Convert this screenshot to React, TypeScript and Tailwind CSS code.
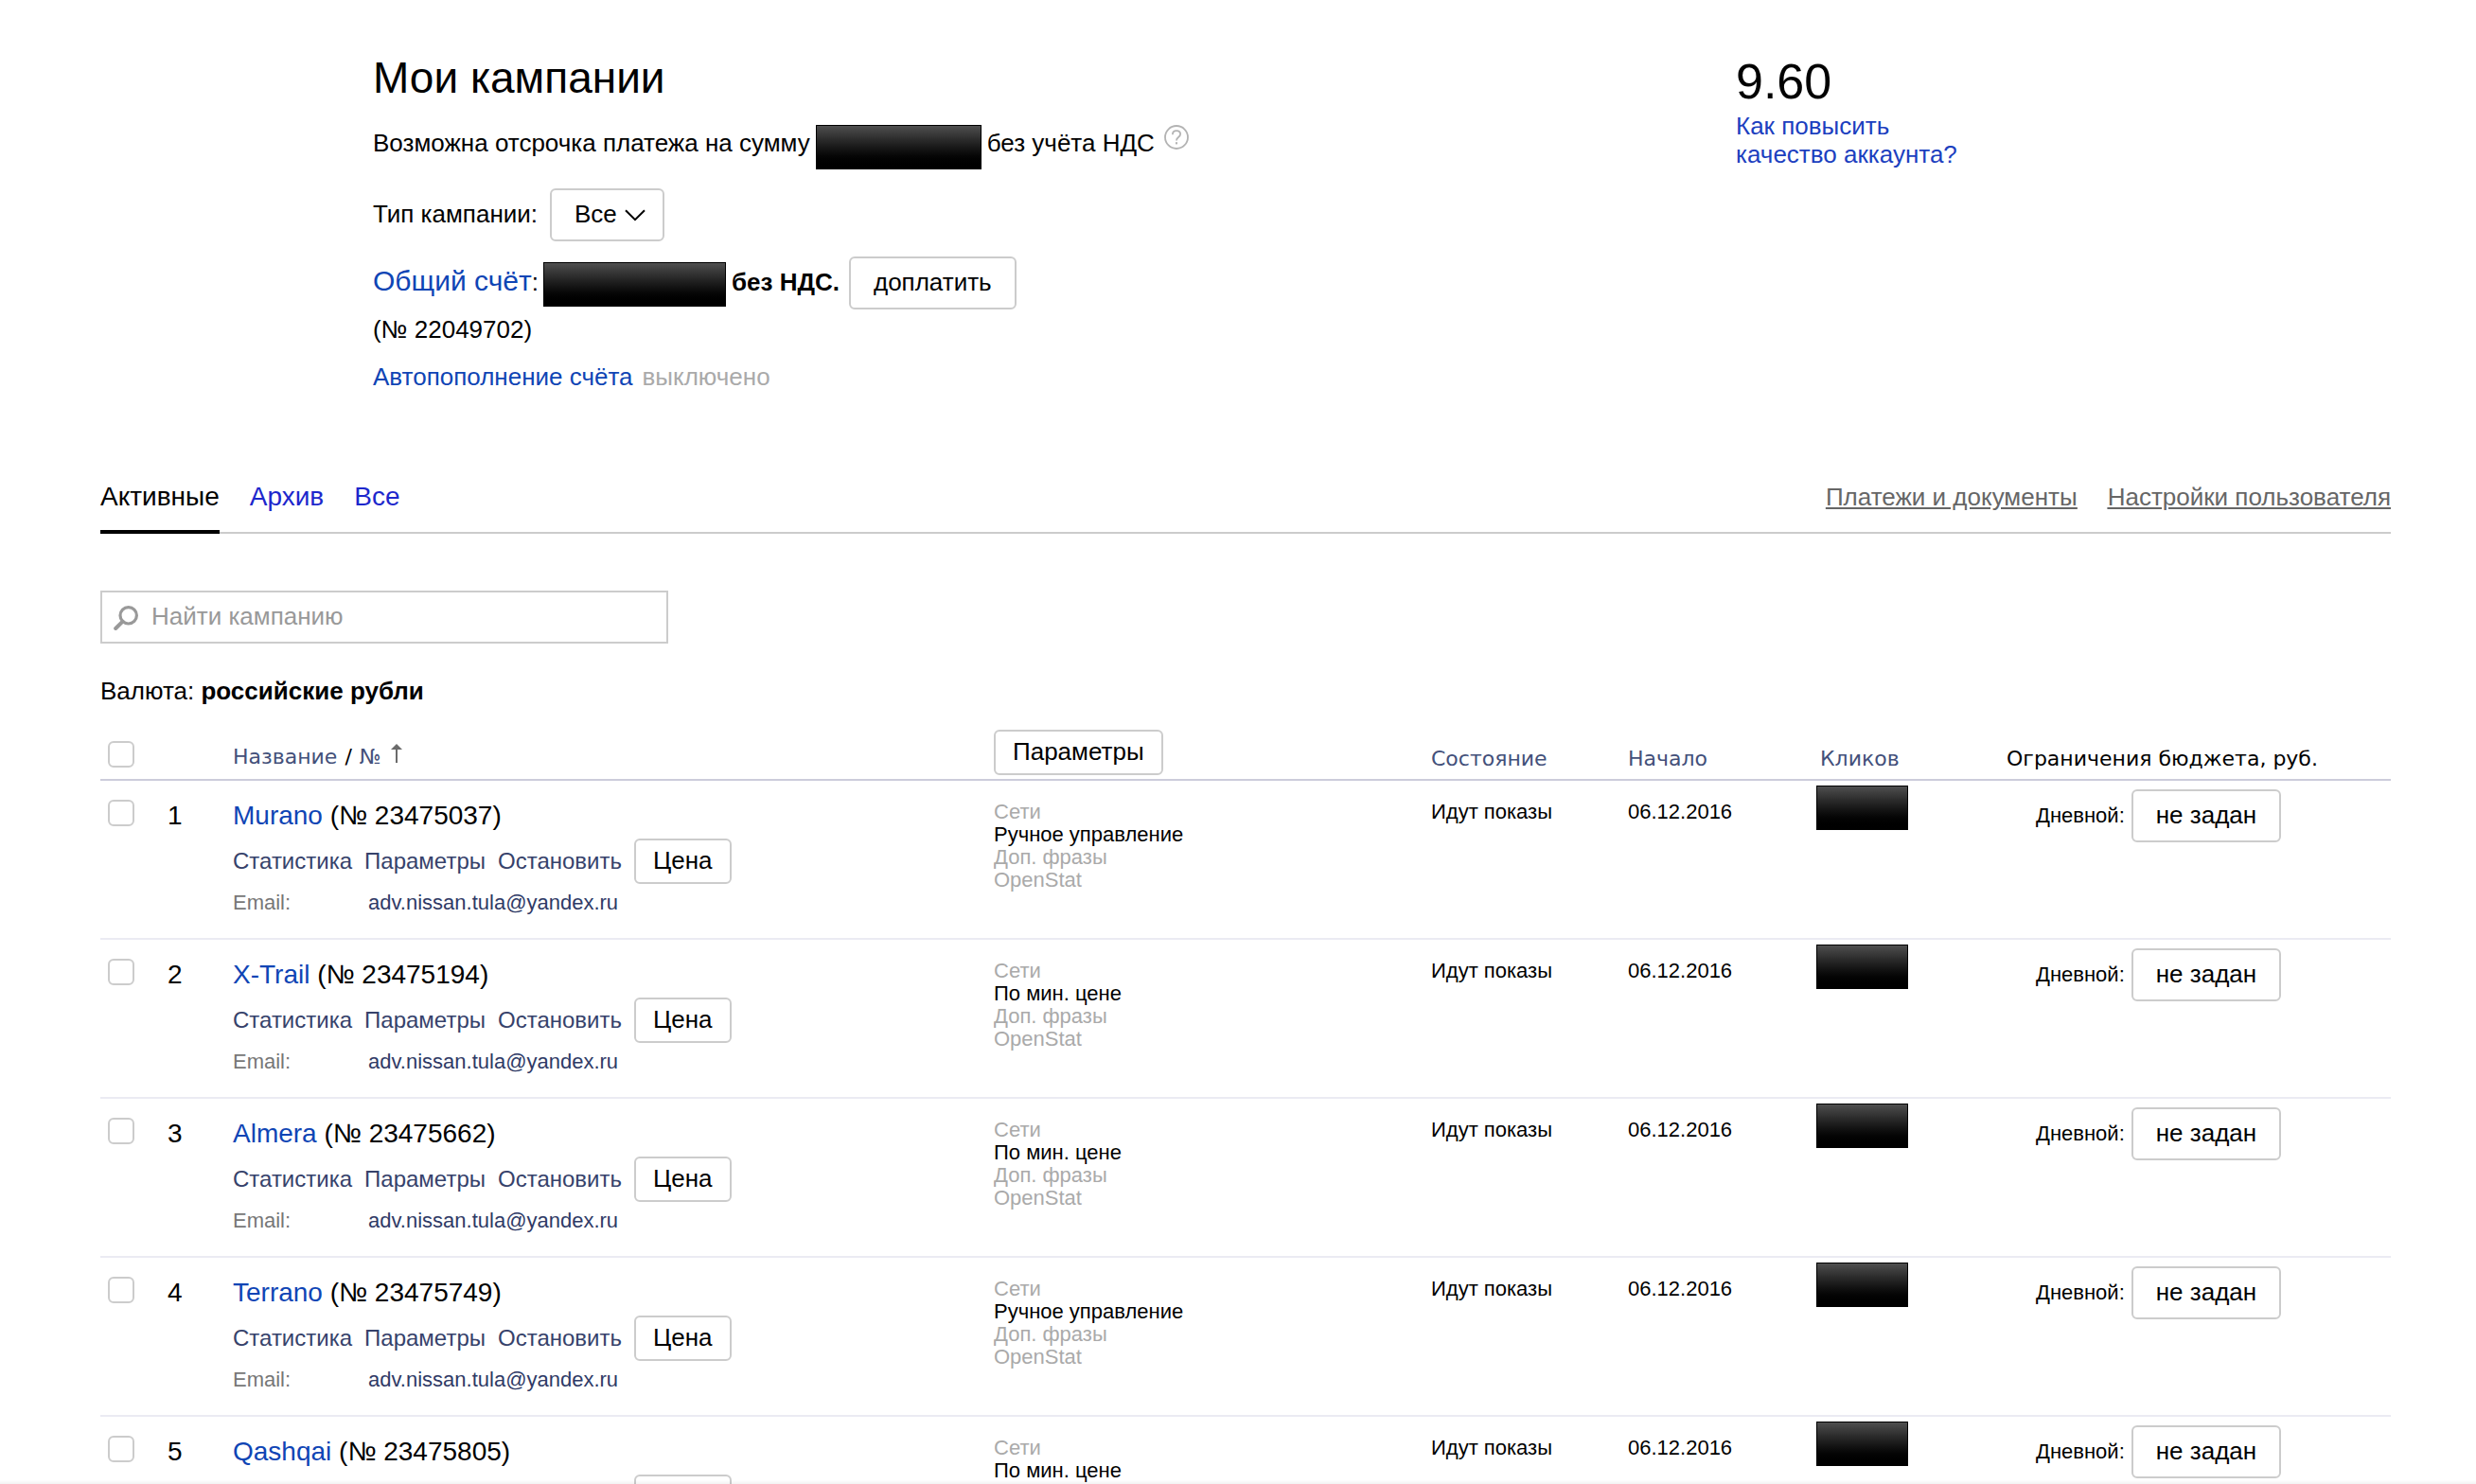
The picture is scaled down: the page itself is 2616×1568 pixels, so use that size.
import type { ReactNode } from "react";

type Campaign = { name: string; id: string; strategy: string };

const campaigns: Campaign[] = [
  { name: "Murano", id: "23475037", strategy: "Ручное управление" },
  { name: "X-Trail", id: "23475194", strategy: "По мин. цене" },
  { name: "Almera", id: "23475662", strategy: "По мин. цене" },
  { name: "Terrano", id: "23475749", strategy: "Ручное управление" },
  { name: "Qashqai", id: "23475805", strategy: "По мин. цене" },
];

function Button({ children, small = false }: { children: ReactNode; small?: boolean }) {
  return (
    <button
      type="button"
      className={
        "shrink-0 whitespace-nowrap rounded-md border-2 border-[#ccc] bg-white pb-0.5 text-[26px] leading-[30px] text-black " +
        (small ? "h-12 px-[18px]" : "h-14 px-6")
      }
    >
      {children}
    </button>
  );
}

function Redacted({ className }: { className: string }) {
  return (
    <span
      aria-hidden="true"
      className={
        "block h-[47px] shrink-0 border border-black bg-linear-to-b from-[#4f4f4f] to-black " + className
      }
    />
  );
}

function Checkbox({ label }: { label: string }) {
  return (
    <input
      type="checkbox"
      aria-label={label}
      className="block size-7 appearance-none rounded-md border-2 border-[#ccc] bg-white checked:bg-[#ccc]"
    />
  );
}

function Header() {
  return (
    <header className="grid grid-cols-[1440fr_782fr] pl-[394px] pt-[54px]">
      <div>
        <h1 className="text-[46px] leading-[56px]">Мои кампании</h1>
        <p className="mt-[22px] flex items-start">
          <span className="mt-1">Возможна отсрочка платежа на сумму</span>
          <Redacted className="mx-1.5 w-[175px]" />
          <span className="mt-1">без учёта НДС</span>
          <button type="button" aria-label="Справка" className="ml-2.5">
            <svg viewBox="0 0 26 26" className="size-[26px]" fill="none" stroke="#b3b3b3">
              <circle cx="13" cy="13" r="12" strokeWidth="1.8" />
              <path
                d="M8.9 10.2C8.9 7.6 10.6 6.2 13 6.2s4.1 1.4 4.1 3.6c0 1.7-1 2.5-2.3 3.4-1.2.9-1.8 1.5-1.8 3.3"
                strokeWidth="1.8"
              />
              <path d="M13 18.2v2.2" strokeWidth="2.1" />
            </svg>
          </button>
        </p>
        <div className="mt-5 flex items-center">
          <label htmlFor="campaign-type" className="pb-0.5">
            Тип кампании:
          </label>
          <div className="relative ml-[13px]">
            <select
              id="campaign-type"
              className="h-14 w-[121px] appearance-none rounded-md border-2 border-[#ccc] bg-white pb-0.5 pl-6 text-[26px] leading-[30px]"
            >
              <option>Все</option>
              <option>Активные</option>
            </select>
            <svg
              viewBox="0 0 22 13"
              className="pointer-events-none absolute right-5 top-[22px] h-[13px] w-[22px]"
              fill="none"
              stroke="#000"
              strokeWidth="2"
            >
              <path d="M1 1.2 11 11.2 21 1.2" />
            </svg>
          </div>
        </div>
        <div className="mt-4 flex items-center">
          <p className="pb-1">
            <a href="#account" className="text-[30px] text-[#0f45b5]">
              Общий счёт
            </a>
            :
          </p>
          <Redacted className="ml-[5px] mr-1.5 mt-0.5 w-[193px]" />
          <strong className="mr-2.5 pb-0.5">без НДС.</strong>
          <Button>доплатить</Button>
        </div>
        <p className="mt-1.5">(№ 22049702)</p>
        <p className="mt-5">
          <a href="#autopay" className="mr-2.5 text-[#0f45b5]">
            Автопополнение счёта
          </a>
          <span className="text-[#aaa]">выключено</span>
        </p>
      </div>
      <div>
        <div className="pt-0.5 text-[52px] leading-[60px]">9.60</div>
        <a href="#quality" className="mt-0.5 block text-[#1c40bf]">
          Как повысить
          <br />
          качество аккаунта?
        </a>
      </div>
    </header>
  );
}

function Tabs() {
  return (
    <nav className="mt-[94px] flex justify-between shadow-[inset_0_-2px_0_#ccc]">
      <div className="flex gap-8 text-[28px] leading-9">
        <a href="#active" aria-current="page" className="border-b-4 border-black pb-[17px]">
          Активные
        </a>
        <a href="#archive" className="text-[#1d27cc]">
          Архив
        </a>
        <a href="#all" className="text-[#1d27cc]">
          Все
        </a>
      </div>
      <div className="flex gap-8 leading-9 text-[#666] underline">
        <a href="#payments">Платежи и документы</a>
        <a href="#settings">Настройки пользователя</a>
      </div>
    </nav>
  );
}

function Search() {
  return (
    <label className="mt-[60px] flex h-14 w-[600px] items-center border-2 border-[#ccc] pl-3">
      <svg viewBox="0 0 28 28" className="size-7 shrink-0" fill="none" stroke="#999">
        <circle cx="15.7" cy="12.3" r="8.7" strokeWidth="3.2" />
        <path d="M9.6 18.6 2.2 26" strokeWidth="4" strokeLinecap="round" />
      </svg>
      <input
        type="search"
        aria-label="Найти кампанию"
        placeholder="Найти кампанию"
        className="ml-3 w-full pb-0.5 outline-none placeholder:text-[#999]"
      />
    </label>
  );
}

function CampaignRow({ campaign, index }: { campaign: Campaign; index: number }) {
  const cell = "border-b-2 border-[#ebebf3] p-0 ";
  return (
    <tr className="h-[168px] align-top">
      <td className={cell + "pl-2 pt-5"}>
        <Checkbox label={"Выбрать " + campaign.name} />
      </td>
      <td className={cell + "pt-[21px] text-[28px] leading-8"}>{index + 1}</td>
      <td className={cell + "pt-[21px]"}>
        <div className="text-[28px] leading-8">
          <a href="#campaign" className="text-[#0f45b5]">
            {campaign.name}
          </a>{" "}
          (№ {campaign.id})
        </div>
        <div className="mt-2 flex items-center gap-[13px] text-2xl leading-7 text-[#36426b]">
          <a href="#stat">Статистика</a>
          <a href="#params">Параметры</a>
          <a href="#stop">Остановить</a>
          <Button small>Цена</Button>
        </div>
        <div className="mt-2 flex text-[22px] leading-6">
          <span className="w-[143px] text-[#777]">Email:</span>
          <a href="mailto:adv.nissan.tula@yandex.ru" className="text-[#2f3a66]">
            adv.nissan.tula@yandex.ru
          </a>
        </div>
      </td>
      <td className={cell + "pt-[21px] text-[22px] leading-6 text-[#aaa]"}>
        <div>Сети</div>
        <div className="text-black">{campaign.strategy}</div>
        <div>Доп. фразы</div>
        <div>OpenStat</div>
      </td>
      <td className={cell + "pt-[21px] text-[22px] leading-6"}>Идут показы</td>
      <td className={cell + "pt-[21px] text-[22px] leading-6"}>06.12.2016</td>
      <td className={cell + "pt-[5px]"}>
        <Redacted className="w-[97px]" />
      </td>
      <td className={cell + "pt-[9px]"}>
        <div className="flex items-center gap-[7px] pl-[31px] text-[22px] leading-6">
          Дневной:
          <Button>не задан</Button>
        </div>
      </td>
    </tr>
  );
}

function CampaignTable() {
  const head = "border-b-2 border-[#ccccdb] p-0 text-left font-normal ";
  const text = "pb-[7px] font-['DejaVu_Sans',sans-serif] text-[22px] leading-7 ";
  return (
    <table className="mt-[26px] w-full table-fixed border-separate border-spacing-0">
      <colgroup>
        <col className="w-[71px]" />
        <col className="w-[69px]" />
        <col />
        <col className="w-[462px]" />
        <col className="w-[208px]" />
        <col className="w-[199px]" />
        <col className="w-[201px]" />
        <col className="w-[406px]" />
      </colgroup>
      <thead>
        <tr className="h-[54px] align-bottom">
          <th className={head + "pb-3 pl-2"}>
            <Checkbox label="Выбрать все кампании" />
          </th>
          <th className={head} />
          <th className={head}>
            <div className="flex items-end gap-2 pb-[9px] font-['DejaVu_Sans',sans-serif] text-[22px] leading-7 text-[#43507a]">
              <a href="#by-name">Название</a>
              <span className="text-black">/</span>
              <a href="#by-number" className="flex gap-2.5">
                №
                <svg viewBox="0 0 12 20" className="h-5 w-3" fill="none">
                  <path d="M6 3v17" stroke="#6b6b6b" strokeWidth="2" />
                  <path d="M6 0 12 6H0z" fill="#6b6b6b" />
                </svg>
              </a>
            </div>
          </th>
          <th className={head + "pb-1"}>
            <Button small>Параметры</Button>
          </th>
          <th className={head + text + "text-[#43507a]"}>Состояние</th>
          <th className={head + text + "text-[#43507a]"}>Начало</th>
          <th className={head + text + "pl-1 text-[#43507a]"}>Кликов</th>
          <th className={head + text}>Ограничения бюджета, руб.</th>
        </tr>
      </thead>
      <tbody>
        {campaigns.map((campaign, index) => (
          <CampaignRow key={campaign.id} campaign={campaign} index={index} />
        ))}
      </tbody>
    </table>
  );
}

export default function App() {
  return (
    <div className="h-screen overflow-y-auto bg-white font-['Liberation_Sans',Arial,sans-serif] text-[26px] leading-[30px] text-black [scrollbar-width:none]">
      <Header />
      <main className="pl-[106px] pr-[90px]">
        <Tabs />
        <Search />
        <p className="mt-[35px]">
          Валюта: <strong>российские рубли</strong>
        </p>
        <CampaignTable />
      </main>
      <div className="pointer-events-none fixed inset-x-0 bottom-0 h-1 bg-linear-to-b from-transparent to-black/5" />
    </div>
  );
}
